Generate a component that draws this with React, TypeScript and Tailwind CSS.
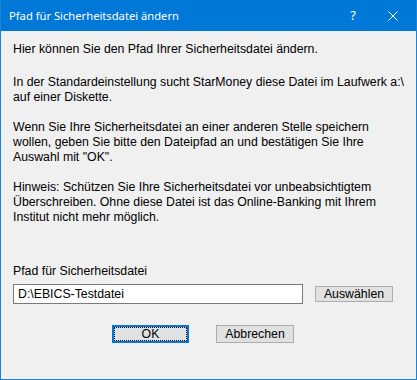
export default function App() {
  return (
    <div className="flex h-[380px] w-[417px] flex-col border border-t-0 border-[#1883d7] bg-[#f0f0f0] font-['Liberation_Sans',Arial,sans-serif] text-[12.3px] leading-[15px] text-black">
      {/* title bar */}
      <div className="flex h-[31px] shrink-0 items-center bg-[#0078d7] pl-[8px] text-white">
        <span className="flex-1 font-['Noto_Sans',sans-serif] text-[11.2px]">Pfad für Sicherheitsdatei ändern</span>
        <span className="w-[20px] text-center font-['Noto_Sans',sans-serif] text-[13px]">?</span>
        <div className="ml-[25px] mr-[18px] flex h-[10px] w-[10px] items-center justify-center">
          <svg width="10" height="10" viewBox="0 0 10 10">
            <path d="M0.5 0.5L9.5 9.5M9.5 0.5L0.5 9.5" stroke="white" strokeWidth="1" />
          </svg>
        </div>
      </div>

      {/* body */}
      <div className="flex flex-col whitespace-nowrap pl-[12px] pt-[11px]">
        <p>Hier können Sie den Pfad Ihrer Sicherheitsdatei ändern.</p>
        <p className="mt-[18px]">
          In der Standardeinstellung sucht StarMoney diese Datei im Laufwerk a:\
          <br />
          auf einer Diskette.
        </p>
        <p className="mt-[15px]">
          Wenn Sie Ihre Sicherheitsdatei an einer anderen Stelle speichern
          <br />
          wollen, geben Sie bitte den Dateipfad an und bestätigen Sie Ihre
          <br />
          Auswahl mit "OK".
        </p>
        <p className="mt-[15px]">
          Hinweis: Schützen Sie Ihre Sicherheitsdatei vor unbeabsichtigtem
          <br />
          Überschreiben. Ohne diese Datei ist das Online-Banking mit Ihrem
          <br />
          Institut nicht mehr möglich.
        </p>

        <p className="mt-[39px]">Pfad für Sicherheitsdatei</p>
        <div className="mt-[5px] flex items-center">
          <div className="flex h-[20px] w-[290px] items-center border border-[#7a7a7a] bg-white pl-[4px]">
            D:\EBICS-Testdatei
          </div>
          <button
            type="button"
            className="ml-[12px] h-[16px] w-[78px] border border-[#adadad] bg-[#e1e1e1] text-center leading-[14px]"
          >
            Auswählen
          </button>
        </div>

        <div className="mt-[21px] flex pl-[99px]">
          <button
            type="button"
            className="h-[18px] w-[77px] border-[2px] border-[#0078d7] bg-[#e1e1e1] p-0"
          >
            <div className="h-full w-full border border-dotted border-black leading-[12px]">OK</div>
          </button>
          <button
            type="button"
            className="ml-[27px] h-[18px] w-[78px] border border-[#adadad] bg-[#e1e1e1] leading-[16px]"
          >
            Abbrechen
          </button>
        </div>
      </div>
    </div>
  );
}
